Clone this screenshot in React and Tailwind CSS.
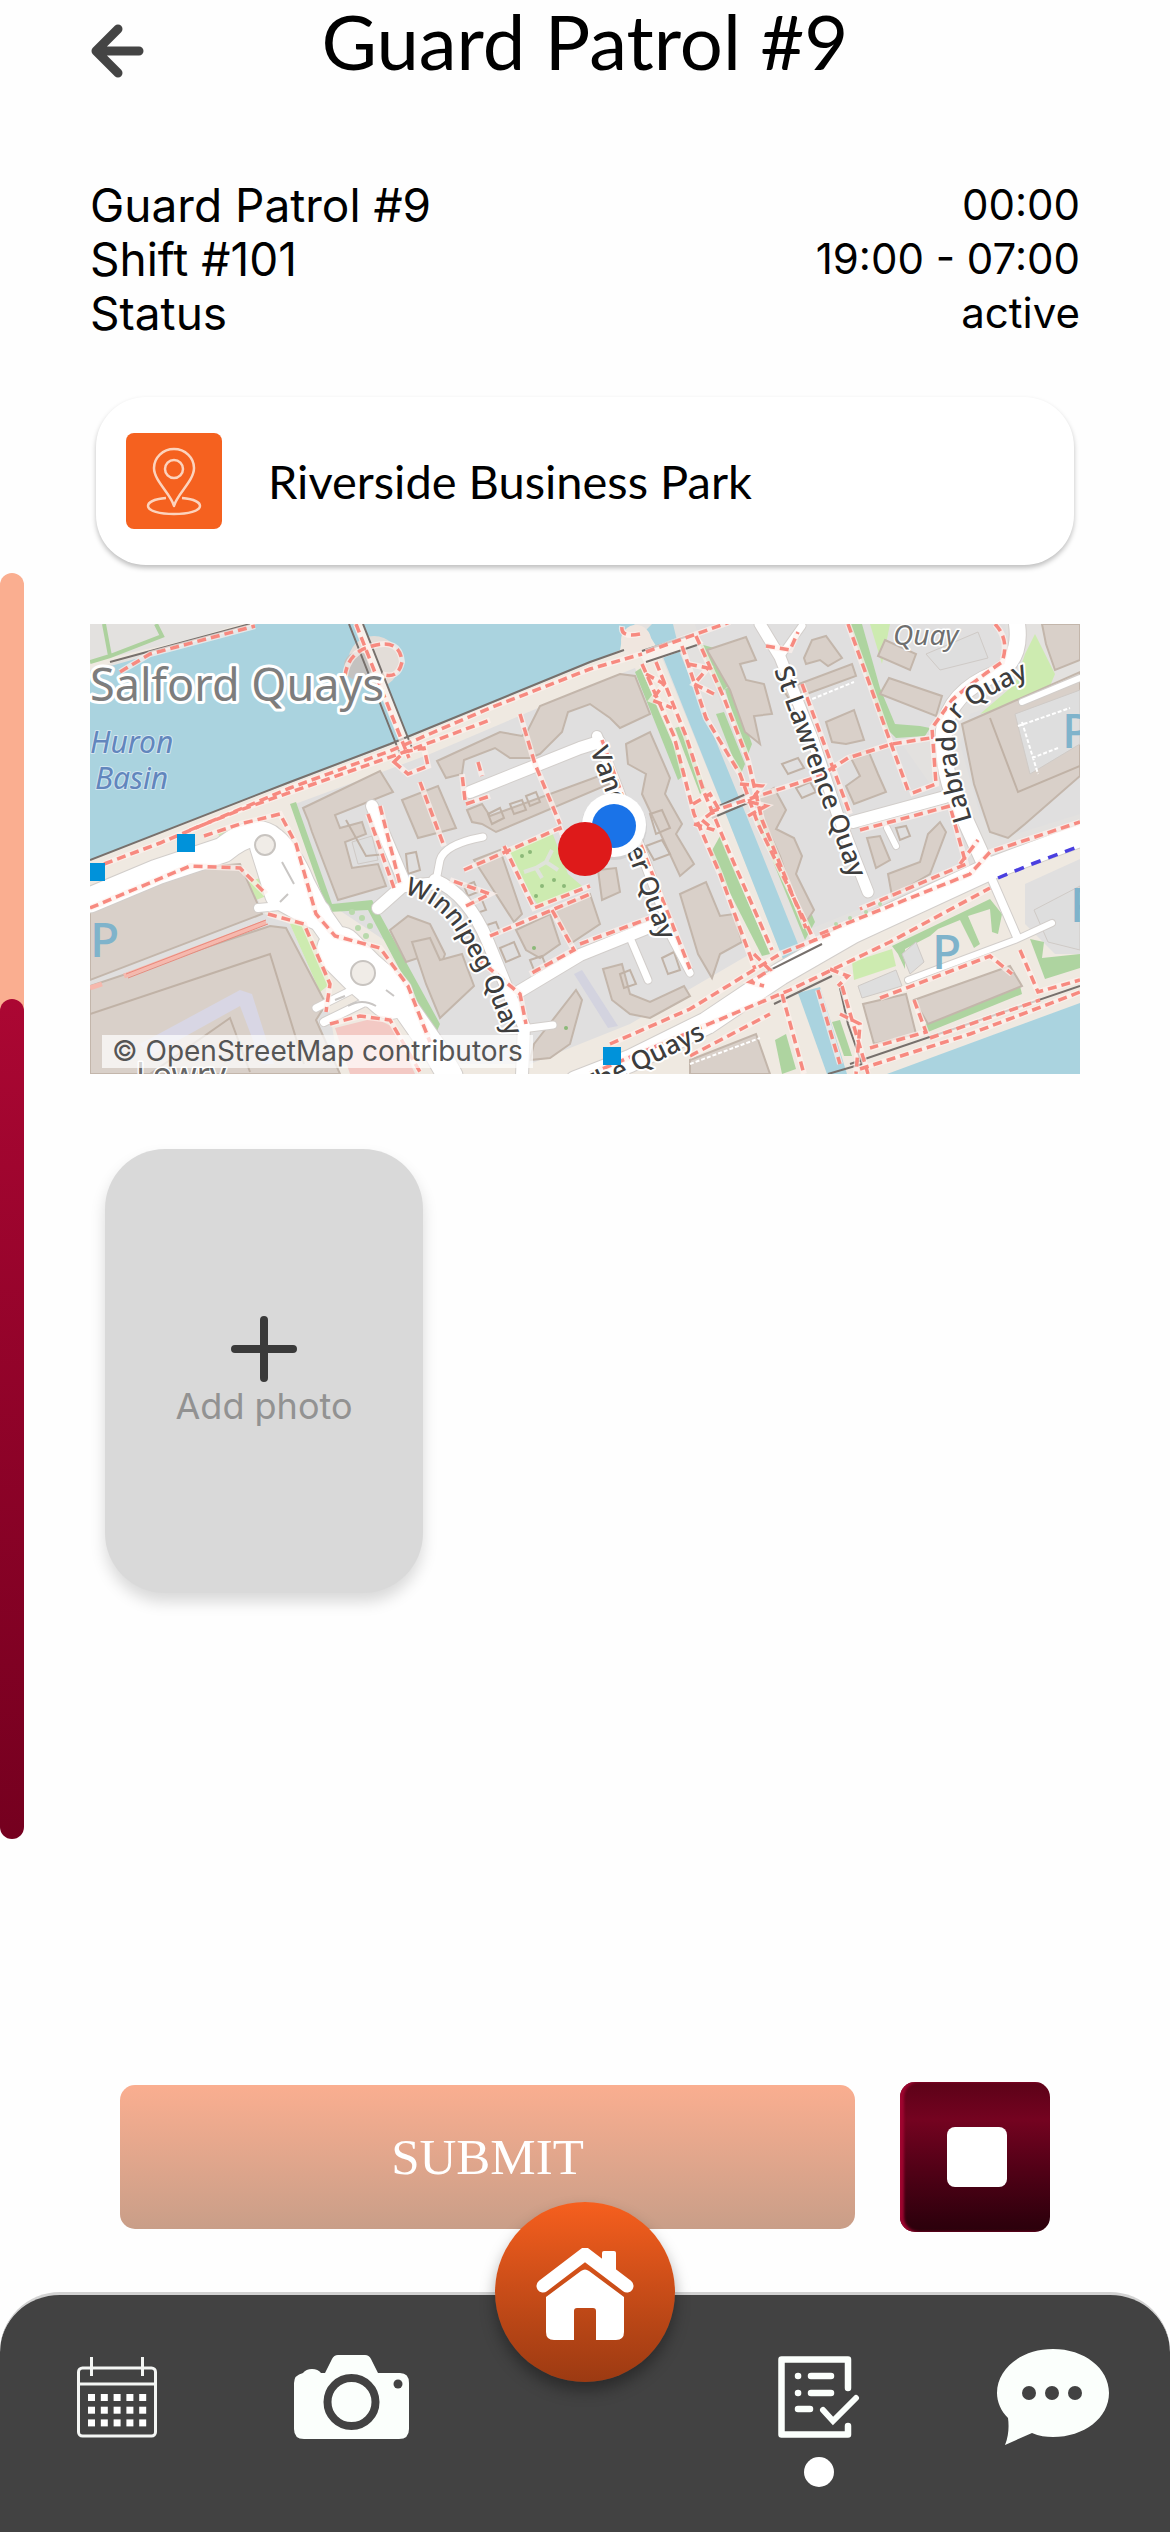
import { useState } from "react";

const details = [
  { label: "Guard Patrol #9", value: "00:00" },
  { label: "Shift #101", value: "19:00 - 07:00" },
  { label: "Status", value: "active" },
];

// map shapes, in map units (990 x 450)
const water = [
  "167,0 0,48 0,236 93,199 200,159 300,121 400,80 500,39 530,26 533,9 545,0",
  "562,0 583,0 590,29 657,193 710,325 693,335 637,193 573,33 556,6",
  "708,369 730,363 757,450 737,450",
  "990,379 900,412 797,450 990,450",
];

const paved = [
  "0,236 200,158 500,38 530,26 533,8 548,2 560,8 572,34 637,193 693,335 720,330 990,215 990,450 0,450",
  "0,38 167,0 150,0 0,46",
];

const residential = [
  "205,180 300,145 340,130 500,62 545,44 600,170 660,330 540,400 440,440 360,440 300,320 240,280",
  "605,0 755,0 800,110 812,120 840,160 875,175 880,240 720,305 660,170",
  "765,0 915,0 920,30 860,80 840,108 805,108 790,60",
  "990,50 880,90 870,120 890,190 910,215 990,190",
  "0,290 150,240 175,290 200,300 240,390 250,450 0,450",
  "935,260 990,235 990,330 965,330 935,300",
];

const lightGreen = [
  "158,258 166,276 182,270 176,252",
  "200,300 210,296 232,330 240,360 230,368",
  "418,226 462,208 478,250 492,262 450,284 440,270",
  "762,338 802,325 806,342 764,356",
  "780,0 800,0 792,40",
  "945,10 965,50 960,62 915,84 890,90 925,60 935,30",
  "128,210 143,204 146,210 132,216",
];

const green = [
  "760,0 772,0 790,64 805,100 830,102 840,104 835,112 806,114 792,100",
  "545,48 551,44 570,90 596,150 588,156",
  "585,104 592,102 616,165 610,170",
  "610,20 624,24 640,60 630,70",
  "626,90 634,88 655,140 650,152",
  "635,65 642,62 662,120 656,135",
  "666,196 678,186 725,298 715,316",
  "620,230 630,212 680,330 672,332",
  "200,180 206,178 242,280 282,276 350,400 345,412 278,286 238,288",
  "802,322 900,275 912,290 908,310 902,308 900,285 878,292 890,320 884,324 870,296 848,305 840,312 815,325 815,345 808,330",
  "940,315 954,318 952,334 990,330 990,344 955,355",
  "835,400 930,362 932,370 838,408",
  "685,416 696,410 706,445 692,450",
  "742,398 750,396 762,432 754,432",
];

const buildings = [
  "213,184 290,147 303,168 245,191 250,204 272,198 276,210 255,218 262,244 288,240 296,262 248,276 222,208 218,196",
  "312,176 348,162 366,204 328,214",
  "347,137 410,108 432,112 438,106 450,82 500,62 530,50 545,52 560,90 530,104 520,94 500,80 478,88 472,108 450,130 440,134 420,134 405,124 374,136 372,150 356,154",
  "377,186 392,180 400,192 520,148 524,158 406,208 392,200 382,198",
  "384,236 410,226 432,290 424,298",
  "355,330 340,300 318,292 300,306 316,338 334,332 350,344",
  "322,318 340,314 350,336 372,330 384,362 350,394 336,360",
  "426,306 460,290 470,320 450,334 436,326",
  "464,286 500,270 510,300 480,320",
  "444,420 486,366 492,376 480,420 460,434 440,436",
  "536,120 560,108 580,154 575,170 592,200 586,210 604,240 590,252 566,200 552,170 556,150 538,140",
  "508,246 526,244 530,268 512,276",
  "590,270 616,258 630,292 644,290 652,318 630,330 622,354 608,330",
  "513,345 532,340 540,370 560,378 594,362 600,372 560,394 540,390 522,376",
  "617,26 656,13 666,36 650,40 656,56 674,60 682,90 664,92 670,120 655,108 640,66",
  "664,176 684,164 696,186 686,205 704,214 712,232 706,250 724,286 716,298 700,262 690,232",
  "714,34 722,16 736,12 752,34 738,42 730,36 716,40",
  "693,66 762,40 766,52 700,76",
  "736,98 764,86 774,116 756,120 742,118",
  "760,132 778,126 788,150 796,168 764,180 756,162 770,152",
  "777,214 790,212 800,236 786,244",
  "798,250 830,238 838,210 850,198 856,208 840,250 802,272",
  "799,54 852,72 846,92 790,70",
  "795,16 826,30 820,46 788,32",
  "872,100 895,90 990,48 990,152 935,200 918,214 900,208 884,160",
  "952,0 990,0 990,36 965,46 956,20",
  "0,276 80,246 150,240 172,290 0,356",
  "0,362 180,302 196,304 236,380 226,396 250,450 0,450",
  "773,380 816,370 826,410 784,420",
  "824,376 920,342 932,362 838,400",
  "600,436 666,410 680,450 600,450",
];

const courts = [
  "262,218 282,212 288,236 268,240",
  "925,90 990,66 990,120 940,150",
  "836,30 888,8 898,34 850,46",
  "812,330 826,318 834,338 820,350",
  "768,362 806,346 812,362 772,374",
  "944,286 990,262 990,326 958,318",
];

const roads = [
  { d: "M0 276 L67 248 L133 226 Q165 200 183 216 Q200 230 212 260 L227 289 L253 326 L273 349 L317 386 L347 429 L360 452", w: 25 },
  { d: "M175 222 L190 270 L226 290", w: 30 },
  { d: "M250 326 L273 349 L300 372", w: 46 },
  { d: "M226 384 L262 366", w: 7 },
  { d: "M234 398 L275 378 L305 385", w: 8 },
  { d: "M168 284 L212 280", w: 8 },
  { d: "M282 182 L315 260 L288 284 M315 262 L350 259", w: 12 },
  { d: "M393 213 Q355 220 350 236 L345 262", w: 7 },
  { d: "M345 256 Q378 270 398 318 L420 372 L434 402 L432 452", w: 12 },
  { d: "M432 405 L463 401", w: 7 },
  { d: "M380 168 L490 124 L509 118", w: 12 },
  { d: "M430 367 L490 331 L562 302", w: 12 },
  { d: "M507 112 L527 163 L577 296", w: 10 },
  { d: "M572 296 L600 349 M541 316 L558 356", w: 7 },
  { d: "M670 0 L690 33 L723 116 L747 189 L778 268", w: 11 },
  { d: "M690 33 L712 2", w: 7 },
  { d: "M763 198 L855 173", w: 12 },
  { d: "M797 204 L806 222", w: 6 },
  { d: "M927 0 Q932 36 905 50 Q860 68 854 106 Q852 150 868 180 L897 244", w: 16 },
  { d: "M897 244 L927 313", w: 8 },
  { d: "M818 356 L925 316 L962 299", w: 6 },
  { d: "M932 78 L990 54", w: 6 },
  { d: "M486 458 L540 437 L617 399 L690 350 L763 308 L897 246 L1000 208", w: 22 },
];

const footpaths = [
  "M30 48 L60 30 L165 2",
  "M14 240 L70 219 L200 164 L300 127 L400 84 L500 45 L552 30",
  "M100 206 L150 186 L320 126 L400 96",
  "M266 0 L284 46 L302 92 L319 134",
  "M255 52 Q258 28 282 22 Q310 14 312 38 Q308 56 292 50",
  "M304 138 L318 150 L338 142 L334 124 L314 128 Z",
  "M330 158 L354 222",
  "M430 90 L445 140 L470 200",
  "M375 176 L372 150 M388 138 L392 152 M376 180 L400 172",
  "M374 246 L470 204 L480 230",
  "M414 222 L444 284 L500 262 M400 312 L500 270",
  "M462 286 L484 326 L440 350",
  "M114 212 L150 200 L190 190 L206 220 L226 290 L245 312 L290 324 L318 362 L340 418",
  "M0 284 L100 242 L150 244 L176 270",
  "M178 290 L214 300 L240 360 L236 388",
  "M240 400 L270 392 L300 396 L330 448",
  "M290 182 L310 260 M278 190 L304 264",
  "M376 282 L400 270 L360 256 M370 310 L382 330 L430 370 L436 400",
  "M512 116 L545 206 L600 345",
  "M490 320 L560 294",
  "M550 10 Q530 14 532 2",
  "M552 40 L584 112 L604 190 L630 250 L665 345",
  "M566 38 L596 112 L614 168 L640 230 L682 326",
  "M592 22 L616 94 L650 150 L668 200 L724 316",
  "M606 12 L634 74 L658 136 L672 196 L716 304",
  "M556 50 L574 60 L562 76 L582 84 M598 40 L618 44 L604 60 L624 70",
  "M556 28 L640 -2",
  "M603 180 L620 170 L628 184 L612 196 L624 206 L604 200",
  "M650 160 L672 162 L660 178 L676 182 L658 192",
  "M620 188 L662 174 L730 152 L758 134 L802 120 L840 114",
  "M676 22 L700 26 L708 8 M712 60 L760 190",
  "M758 0 L776 50 L796 106 L818 166",
  "M905 0 Q920 16 912 38 Q880 60 862 76 L842 104 L846 160 L820 170",
  "M770 206 L860 182 L876 240 L770 285",
  "M730 310 L880 250 L900 228 L990 198",
  "M520 420 L600 385 L690 330 L740 310",
  "M500 450 L600 408 L700 366 L800 318 L900 264",
  "M600 432 L680 390 M692 370 L714 450 M728 366 L750 440 M752 362 L778 450",
  "M664 330 L680 346 L660 358 L674 362 M740 345 L758 352 L748 362",
  "M790 374 L900 332 L922 350 M824 376 L836 408 L780 424",
  "M930 326 L948 368 L990 356 M840 414 L950 376",
  "M770 445 L880 410 L990 368",
  "M750 390 L770 400 L766 450",
  "M870 240 L888 216",
];

const darkLines = [
  "M259 0 L310 130 M273 0 L322 124",
  "M552 27 L604 10 M556 38 L610 20",
  "M620 186 L656 170 M622 194 L660 178",
  "M672 350 L732 320 M684 380 L742 352",
  "M20 38 L160 0",
  "M0 236 L200 158 L300 120 L500 38 L534 26",
  "M760 440 L990 362",
  "M750 364 L758 400 L772 440 L738 450",
];

const buildingTrims = [
  "M0 390 L180 330 L214 440",
  "M60 450 L140 394 L160 448",
  "M900 94 L928 168 L990 142",
  "M256 196 L276 232 L296 230",
  "M398 190 L410 184 L414 194 L402 200 Z M420 180 L432 176 L436 186 L424 190 Z M436 172 L446 168 L450 178 L440 182 Z",
  "M374 262 L384 258 L388 268 L378 272 Z M380 280 L392 276 L396 286 L384 290 Z M394 302 L406 298 L410 308 L398 312 Z",
  "M316 230 L326 228 L330 246 L318 250 Z M440 336 L452 332 L456 342 L444 346 Z M410 324 L424 318 L430 332 L416 338 Z",
  "M560 190 L572 186 L580 204 L566 210 Z M556 222 L572 216 L580 230 L564 236 Z",
  "M530 350 L540 346 L546 360 L534 364 Z M572 334 L584 328 L590 346 L578 350 Z",
  "M692 140 L708 134 L714 144 L698 150 Z M706 164 L720 158 L726 168 L712 174 Z",
  "M806 204 L816 202 L820 212 L810 216 Z",
];

function PatrolMap() {
  return (
    <svg viewBox="0 0 990 450" className="block w-full" role="img" aria-label="Patrol area">
      <rect width="990" height="450" fill="#e3e1df" />
      {paved.map((p) => <polygon key={p} points={p} fill="#efe9e1" />)}
      {residential.map((p) => <polygon key={p} points={p} fill="#e0dfdf" />)}
      <path d="M0 38 L20 32 L72 12 L66 0 M20 32 L14 0" fill="none" stroke="#add19e" strokeWidth="4" />
      {water.map((p) => <polygon key={p} points={p} fill="#aad3df" />)}
      <circle cx="284" cy="38" r="26" fill="#e3ddd8" />
      <circle cx="268" cy="42" r="14" fill="#c4c2c0" />
      <circle cx="546" cy="16" r="15" fill="#f0e6df" />
      {lightGreen.map((p) => <polygon key={p} points={p} fill="#cdebb0" />)}
      {green.map((p) => <polygon key={p} points={p} fill="#aed4a0" />)}
      {buildings.map((p) => (
        <polygon key={p} points={p} fill="#d9d0c9" stroke="#c3b6ab" strokeWidth="2" />
      ))}
      {courts.map((p) => <polygon key={p} points={p} fill="#dedede" stroke="#cfcac6" />)}
      <polygon points="50,420 150,366 162,370 184,440 172,440 150,382 60,432" fill="#d8d6e4" />
      <polygon points="484,350 492,346 528,402 518,404" fill="#d3d3df" />
      <polygon points="245,404 285,394 305,404 325,450 260,450" fill="#f3c9c4" />
      {buildingTrims.map((d) => (
        <path key={d} d={d} fill="none" stroke="#c0b2a6" strokeWidth="2" />
      ))}
      <path d="M34 352 L176 298 M0 364 L12 360" stroke="#f6b8ad" strokeWidth="5" />
      <path d="M36 350 L176 296 M38 354 L178 300" stroke="#e8897c" strokeWidth="1" />
      <path d="M928 102 L980 84 M932 98 L948 150 M942 134 L968 124 M700 84 L764 58 M600 440 L670 414" stroke="#fff" strokeWidth="2" strokeDasharray="4 2" />

      {/* streets */}
      {roads.map((r) => (
        <path key={r.d} d={r.d} fill="none" stroke="#d2cecb" strokeWidth={r.w + 2} strokeLinecap="round" strokeLinejoin="round" />
      ))}
      {roads.map((r) => (
        <path key={r.d} d={r.d} fill="none" stroke="#fff" strokeWidth={r.w} strokeLinecap="round" strokeLinejoin="round" />
      ))}
      <circle cx="175" cy="221" r="10" fill="#f0ece7" stroke="#c8c4c0" strokeWidth="2" />
      <circle cx="273" cy="349" r="12" fill="#f0ece7" stroke="#c8c4c0" strokeWidth="2" />
      <path d="M192 238 L204 260 M190 278 L198 270 M245 376 L255 372 M296 366 L304 372 M258 382 Q272 374 286 382" fill="none" stroke="#c9c6c4" strokeWidth="2" />
      <path d="M316 134 L262 -4 L272 -4 L324 128 Z" fill="#f7f1ec" />
      <path d="M552 30 L604 12 L610 18 L556 38 Z M622 190 L658 176" fill="#f7f1ec" stroke="#f7f1ec" strokeWidth="4" />
      {darkLines.map((d) => (
        <path key={d} d={d} fill="none" stroke="#77706c" strokeWidth="2" />
      ))}
      {footpaths.map((d) => (
        <path key={d} d={d} fill="none" stroke="#fdf1ec" strokeOpacity="0.7" strokeWidth="6" />
      ))}
      {footpaths.map((d) => (
        <path key={d} d={d} fill="none" stroke="#f78a80" strokeWidth="3.5" strokeDasharray="9 5" />
      ))}
      <path d="M908 254 L942 240 L990 222" fill="none" stroke="#4a3fe0" strokeWidth="3.5" strokeDasharray="10 8" />
      <g fill="#8bb978">
        <circle cx="432" cy="232" r="2" /><circle cx="440" cy="228" r="2" /><circle cx="452" cy="262" r="2" />
        <circle cx="446" cy="272" r="2" /><circle cx="464" cy="256" r="2" /><circle cx="474" cy="262" r="2" />
        <circle cx="476" cy="404" r="2" /><circle cx="444" cy="324" r="2" />
      </g>
      <path d="M434 248 L446 244 L456 238 L462 226 M446 244 L452 254 M456 238 L468 246" fill="none" stroke="#dfe3da" strokeWidth="4" />
      <g fill="#b9d9ac">
        <circle cx="262" cy="288" r="3" /><circle cx="272" cy="294" r="3" /><circle cx="268" cy="304" r="3" />
        <circle cx="280" cy="302" r="3" /><circle cx="276" cy="312" r="3" /><circle cx="746" cy="300" r="2" />
        <circle cx="760" cy="294" r="2" /><circle cx="776" cy="288" r="2" /><circle cx="790" cy="280" r="2" />
      </g>

      {/* labels */}
      <defs>
        <path id="winnipeg" d="M314 270 Q352 278 372 318 L390 348 L422 426" />
        <path id="labrador" d="M882 196 Q860 126 867 100 Q872 82 946 50" />
      </defs>
      <g fontFamily='"Noto Sans", sans-serif' stroke="#fff" strokeLinejoin="round" paintOrder="stroke">
        <g fill="#7fb3cb" stroke="none" fontSize="48" fontWeight="500">
          <text x="0" y="333">P</text>
          <text x="842" y="345">P</text>
          <text x="972" y="124">P</text>
          <text x="980" y="298">P</text>
        </g>
        <text x="0" y="77" fontSize="45" fill="#7d7d7d" strokeWidth="6">Salford Quays</text>
        <g fontSize="30" fontStyle="italic" fill="#6286bd" stroke="#d3e6f0" strokeWidth="2">
          <text x="0" y="129">Huron</text>
          <text x="5" y="165">Basin</text>
        </g>
        <text x="803" y="21" fontSize="28" fontStyle="italic" fill="#6f6f6f" strokeWidth="3">Quay</text>
        <text x="46" y="462" fontSize="32" fill="#666" strokeWidth="3">Lowry</text>
        <g fontSize="26" fontWeight="500" fill="#3d3d3d" strokeWidth="4">
          <text fontSize="25"><textPath href="#winnipeg">Winnipeg Quay</textPath></text>
          <text transform="translate(500 126) rotate(70)">Vancouver Quay</text>
          <text transform="translate(684 46) rotate(70)">St Lawrence Quay</text>
          <text><textPath href="#labrador">Labrador Quay</textPath></text>
          <text transform="translate(616 414) rotate(-26)" textAnchor="end">The Quays</text>
        </g>
      </g>

      <g fill="#0092da">
        <rect x="87" y="210" width="18" height="18" />
        <rect x="-3" y="239" width="18" height="18" />
        <rect x="513" y="423" width="18" height="18" />
      </g>

      {/* positions */}
      <circle cx="524" cy="203" r="33" fill="#000" opacity="0.06" />
      <circle cx="524" cy="201" r="32" fill="#fff" />
      <circle cx="524" cy="202" r="22" fill="#1a73e8" />
      <circle cx="495" cy="225" r="27" fill="#de1a1a" />
    </svg>
  );
}

function PinIcon() {
  return (
    <svg viewBox="0 0 96 96" className="size-24" fill="none" stroke="#fcd3bd" strokeWidth="2.5" aria-hidden="true">
      <path d="M48 73 C45 61 28 48 28 35 A20 19 0 0 1 68 35 C68 48 51 61 48 73 Z" strokeLinejoin="round" />
      <circle cx="48" cy="36" r="9" />
      <path d="M40 65 C29 66 22 69 22 73 C22 78 34 81 48 81 C62 81 74 78 74 73 C74 69 67 66 56 65" />
    </svg>
  );
}

function CalendarIcon() {
  const cells = [0, 1, 2].flatMap((r) => [0, 1, 2, 3, 4].map((c) => [c, r]));
  return (
    <svg viewBox="0 0 80 82" className="h-[82px] w-20" aria-hidden="true">
      <rect x="1.5" y="12" width="77" height="68" rx="4" fill="none" stroke="#f4f6f4" strokeWidth="3" />
      <path d="M2 28 H78 M14.5 1 V20 M65.5 1 V20" stroke="#f4f6f4" strokeWidth="3" />
      {cells.map(([c, r]) => (
        <rect key={`${c}-${r}`} x={11 + c * 12.8} y={38 + r * 12.7} width="7" height="7" fill="#fff" />
      ))}
    </svg>
  );
}

function CameraIcon() {
  return (
    <svg viewBox="0 0 115 84" className="h-[84px] w-[115px]" aria-hidden="true">
      <path d="M9 18 Q12 14 18 14 Q24 14 27 18 H31 L38 4 Q40 0 44 0 H71 Q75 0 77 4 L84 18 H106 Q115 18 115 28 V74 Q115 84 105 84 H10 Q0 84 0 74 V28 Q0 20 9 18 Z" fill="#fbfffc" />
      <circle cx="57.5" cy="47" r="24" fill="none" stroke="#424242" strokeWidth="8" />
      <circle cx="104" cy="29" r="4.5" fill="#424242" />
    </svg>
  );
}

function HomeIcon() {
  return (
    <svg viewBox="0 0 98 92" className="h-[92px] w-[98px]" aria-hidden="true">
      <path d="M7 38 L49 6 L91 38" fill="none" stroke="#fff" strokeWidth="13" strokeLinecap="round" strokeLinejoin="round" />
      <path d="M66 16 V5 Q66 3 68 3 H78 Q80 3 80 5 V28 Z" fill="#fff" />
      <path d="M10 49 L45 23 Q49 20 53 23 L88 49 V84 Q88 92 80 92 H60 V63 Q60 60 57 60 H41 Q38 60 38 63 V92 H18 Q10 92 10 84 Z" fill="#fff" />
    </svg>
  );
}

function ReportIcon() {
  return (
    <svg viewBox="0 0 82 82" className="size-[82px]" fill="none" stroke="#fbfffc" strokeLinecap="round" aria-hidden="true">
      <path d="M70 32 V3.5 H3.5 V78.5 H70 V70" strokeWidth="6.5" strokeLinejoin="round" />
      <path d="M20 20 H20.1 M33 20 H53 M20 37 H20.1 M33 37 H53 M20 53 H32" strokeWidth="6.5" />
      <path d="M45 54 L55 65 L78 42" strokeWidth="6" />
    </svg>
  );
}

function ChatIcon() {
  return (
    <svg viewBox="0 0 112 96" className="h-24 w-28" aria-hidden="true">
      <path d="M56 0 C87 0 112 19 112 44 C112 69 87 88 56 88 C49 88 42 87 35 84 L8 96 C12 86 12 76 11 69 C4 62 0 53 0 44 C0 19 25 0 56 0 Z" fill="#fbfffc" />
      <circle cx="32" cy="44" r="7" fill="#424242" />
      <circle cx="55" cy="44" r="7" fill="#424242" />
      <circle cx="78" cy="44" r="7" fill="#424242" />
    </svg>
  );
}

const tabs = [
  { id: "calendar", label: "Calendar", icon: <CalendarIcon /> },
  { id: "camera", label: "Camera", icon: <CameraIcon /> },
  { id: "home", label: "Home", icon: <HomeIcon /> },
  { id: "reports", label: "Reports", icon: <ReportIcon /> },
  { id: "chat", label: "Chat", icon: <ChatIcon /> },
];

function TabBar() {
  const [active, setActive] = useState("reports");

  return (
    <nav className="grid h-60 grid-cols-5 rounded-t-[60px] border-t-[3px] border-[#d2d2d2] bg-[#424242]">
      {tabs.map((tab) =>
        tab.id === "home" ? (
          <div key={tab.id} className="flex justify-center">
            <button
              type="button"
              aria-label={tab.label}
              onClick={() => setActive(tab.id)}
              className="-mt-[93px] flex size-[180px] items-center justify-center rounded-full bg-linear-to-b from-[#f65f1e] to-[#9c3a12] pt-1 shadow-[0_9px_15px_rgba(0,0,0,0.35)]"
            >
              {tab.icon}
            </button>
          </div>
        ) : (
          <button
            key={tab.id}
            type="button"
            aria-label={tab.label}
            onClick={() => setActive(tab.id)}
            className="flex flex-col items-center pt-[52px]"
          >
            <span className="flex h-[100px] items-center">{tab.icon}</span>
            {active === tab.id && <span className="mt-[10px] size-[30px] rounded-full bg-white" />}
          </button>
        )
      )}
    </nav>
  );
}

export default function App() {
  return (
    <div className="flex min-h-screen flex-col bg-[#fefefe] font-['Inter',sans-serif] text-black">
      <div className="flex flex-1">
        {/* progress rail */}
        <div className="w-6 shrink-0 pt-[573px]">
          <div className="h-[450px] rounded-t-full bg-[#faae90]" />
          <div className="-mt-6 h-[840px] rounded-full bg-linear-to-b from-[#ab0733] to-[#75001f]" />
        </div>

        <main className="flex flex-1 flex-col pr-[90px] pl-[66px]">
          <header className="grid h-[102px] grid-cols-[54px_1fr_54px] items-center">
            <button type="button" aria-label="Back">
              <svg viewBox="0 0 54 54" className="size-[54px]" fill="none" stroke="#444" strokeWidth="9" strokeLinecap="round" strokeLinejoin="round" aria-hidden="true">
                <path d="M28 5 L6 27 L28 49 M6 27 H49" />
              </svg>
            </button>
            <h1 className="pb-5 text-center font-['Lato',sans-serif] text-[76px] leading-[82px]">
              Guard Patrol #9
            </h1>
          </header>

          <dl className="mt-[76px]">
            {details.map((d) => (
              <div key={d.label} className="flex h-[54px] items-center justify-between">
                <dt className="text-[46px] leading-[54px]">{d.label}</dt>
                <dd className="text-[42px] leading-[54px]">{d.value}</dd>
              </div>
            ))}
          </dl>

          <section className="mx-[6px] mt-[57px] flex h-[168px] items-center gap-[46px] rounded-[50px] bg-white px-[30px] shadow-[0_3px_5px_rgba(0,0,0,0.25)]">
            <span className="rounded-lg bg-[#f5611f]">
              <PinIcon />
            </span>
            <p className="font-['Lato',sans-serif] text-[47px] leading-[54px]">Riverside Business Park</p>
          </section>

          <figure className="relative mt-[59px] overflow-hidden">
            <PatrolMap />
            <figcaption className="absolute bottom-[6px] left-3 bg-white/70 px-[10px] text-[28px] leading-[33px] text-[#555]">
              © OpenStreetMap contributors
            </figcaption>
          </figure>

          <button
            type="button"
            className="mt-[75px] ml-[15px] flex h-[444px] w-[318px] flex-col items-center justify-center rounded-[60px] bg-[#d9d9d9] pt-1 shadow-[0_9px_15px_rgba(0,0,0,0.15)]"
          >
            <svg viewBox="0 0 66 66" className="size-[66px]" stroke="#3a3a3a" strokeWidth="8" strokeLinecap="round" aria-hidden="true">
              <path d="M33 4 V62 M4 33 H62" />
            </svg>
            <span className="text-[36px] leading-[48px] text-[#929292]">Add photo</span>
          </button>

          <div className="mt-auto mr-[30px] mb-[60px] ml-[30px] flex items-center gap-[45px]">
            <button
              type="submit"
              className="h-36 flex-1 rounded-[15px] bg-linear-to-b from-[#faae90] to-[#c99e88] font-['Liberation_Serif',serif] text-[51px] leading-[54px] text-white"
            >
              SUBMIT
            </button>
            <button
              type="button"
              aria-label="Stop patrol"
              className="flex size-[150px] items-center justify-center rounded-[15px] bg-linear-to-b from-[#5c0218] via-[#740320] via-25% to-[#2a000b] pl-1 shadow-[inset_4px_0_3px_#a00530]"
            >
              <span className="size-[60px] rounded-lg bg-white" />
            </button>
          </div>
        </main>
      </div>

      <TabBar />
    </div>
  );
}
